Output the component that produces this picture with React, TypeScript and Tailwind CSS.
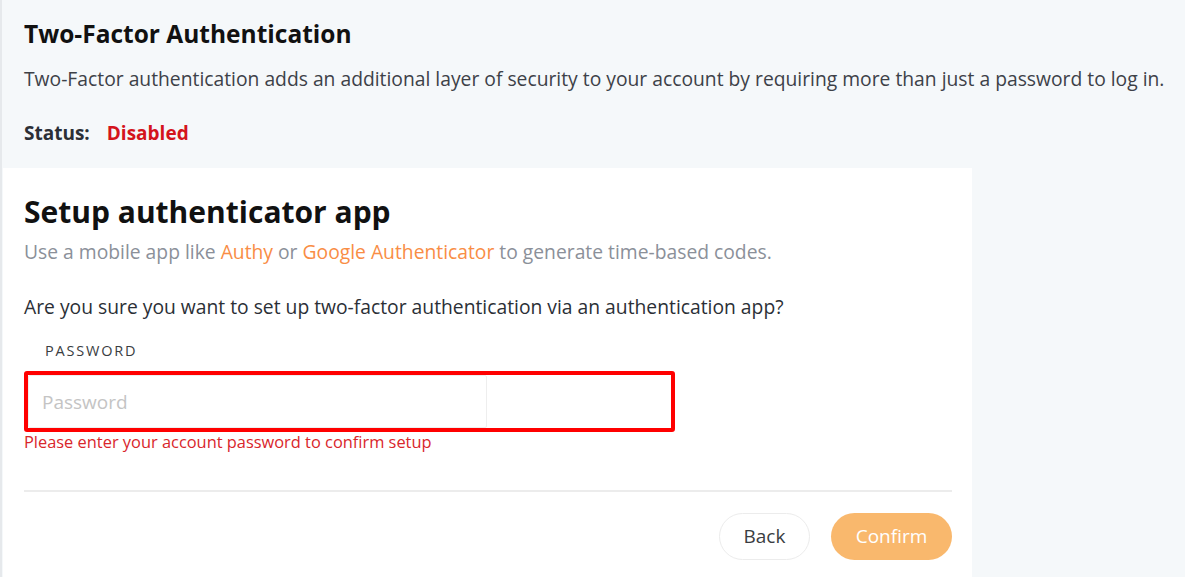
import React from 'react';

export default function App() {
  return (
    <div
      className="min-h-[577px] w-full bg-[#f5f8fa] border-l-2 border-[#e6e9ec] overflow-hidden"
      style={{ fontFamily: '"Open Sans", sans-serif' }}
    >
      <div className="px-[22px] pt-[19px]">
        <h2 className="text-[24.5px] font-bold leading-[30px] text-[#111]">Two-Factor Authentication</h2>
        <p className="mt-[17px] text-[19.3px] leading-[26px] text-[#3d4148] whitespace-nowrap">
          Two-Factor authentication adds an additional layer of security to your account by requiring more than just a password to log in.
        </p>
        <div className="mt-[28px] flex items-center text-[19px] font-bold leading-[26px]">
          <span className="text-[#2b2f36]">Status:</span>
          <span className="ml-[17px] text-[#d4141c]">Disabled</span>
        </div>
      </div>

      <div className="mt-[22px] ml-[1px] w-[969px] bg-white pl-[21px] pt-[25px] pb-[18px]">
        <h1 className="text-[30px] font-bold leading-[38px] text-[#111]">Setup authenticator app</h1>
        <p className="mt-[8px] text-[19.3px] leading-[26px] text-[#8b9099]">
          Use a mobile app like <span className="text-[#f98d45]">Authy</span> or{' '}
          <span className="text-[#f98d45]">Google Authenticator</span> to generate time-based codes.
        </p>
        <p className="mt-[29px] text-[19.3px] leading-[26px] text-[#2b2f36]">
          Are you sure you want to set up two-factor authentication via an authentication app?
        </p>

        <label className="mt-[21px] ml-[21px] block text-[14.5px] leading-[20px] tracking-[1.8px] text-[#3a3d42]">PASSWORD</label>
        <div className="mt-[10px] w-[651px] h-[61px] rounded-[3px] border-[4px] border-[#ff0000] flex items-stretch">
          <input
            type="password"
            placeholder="Password"
            className="w-[459px] h-full border border-[#eeeeee] rounded-[2px] px-[13px] text-[19px] text-[#333] placeholder:text-[#c4c4c4] outline-none"
          />
        </div>
        <p className="text-[16.4px] leading-[20px] text-[#d9262b]">Please enter your account password to confirm setup</p>

        <div className="mt-[38px] h-[2px] w-[928px] bg-[#ececec]" />

        <div className="mt-[21px] flex w-[928px] justify-end gap-[21px]">
          <button className="h-[47px] w-[91px] rounded-full border border-[#ececec] bg-white text-[19px] text-[#3a3d42]">
            Back
          </button>
          <button className="h-[47px] w-[121px] rounded-full bg-[#f9b86d] text-[19px] text-white">
            Confirm
          </button>
        </div>
      </div>
    </div>
  );
}
